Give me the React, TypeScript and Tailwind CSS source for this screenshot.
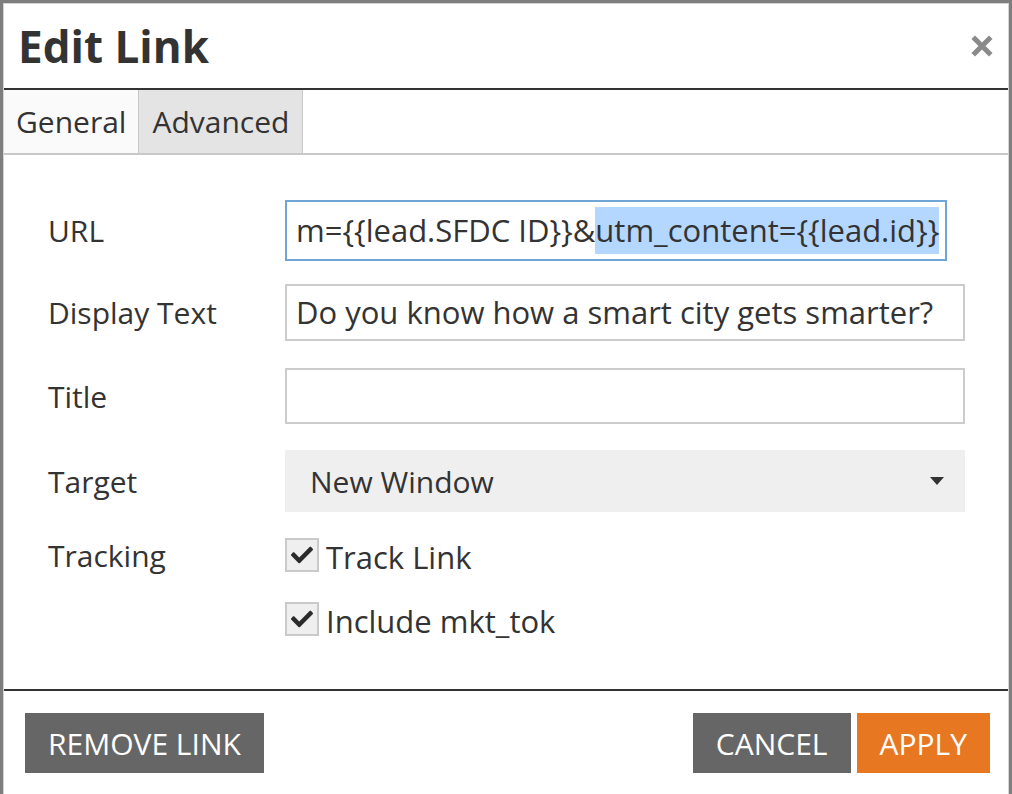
import React from 'react';
import { FaCheck } from 'react-icons/fa';

const Field = ({ label, children, className }: { label: string; children: React.ReactNode; className: string }) => (
  <div className={`flex items-center ${className}`}>
    <div className="w-[237px] shrink-0">{label}</div>
    {children}
  </div>
);

const Checkbox = ({ label }: { label: string }) => (
  <div className="flex items-center h-[34px]">
    <span className="flex items-center justify-center w-[34px] h-[34px] border-2 border-[#cacaca] bg-[#efefef]">
      <FaCheck className="w-[22px] h-[22px] text-[#2b2b2b]" />
    </span>
    <span className="ml-[7px] text-[31px] translate-y-[2px]">{label}</span>
  </div>
);

const App = () => {
  return (
    <div className="w-[1012px] h-[794px] overflow-hidden bg-[#7e7e7e] pt-[3px] px-[3px] font-['Open_Sans',sans-serif] text-[#333333]">
      <div className="h-[800px] bg-white border border-[#d4d4d4] flex flex-col">
        {/* Header */}
        <div className="h-[84px] flex items-center justify-between pl-[14px] pr-[15px]">
          <h1 className="text-[44px] font-bold leading-none text-[#333333]">Edit Link</h1>
          <svg width="22" height="22" viewBox="0 0 22 22" className="text-[#8a8a8a]">
            <path d="M4 4 L18 18 M18 4 L4 18" stroke="currentColor" strokeWidth="5" strokeLinecap="square" />
          </svg>
        </div>
        <div className="h-[2px] bg-[#333333]" />

        {/* Tabs */}
        <div className="flex h-[65px] border-b-2 border-[#c8c8c8] text-[30px]">
          <div className="flex items-center px-[12px] bg-[#fafafa] border-r border-[#c8c8c8]">General</div>
          <div className="flex items-center px-[13px] bg-[#e4e4e4] border-r border-[#c8c8c8]">Advanced</div>
        </div>

        {/* Form */}
        <div className="h-[534px] pl-[44px] text-[30px]">
          <Field label="URL" className="mt-[45px] h-[61px]">
            <div className="w-[662px] h-[61px] border-2 border-[#6fa6d6] flex items-center pl-[9px] overflow-hidden whitespace-nowrap text-[31px]">
              <span>m={'{{'}lead.SFDC ID{'}}'}&amp;</span>
              <span className="bg-[#b3d7ff]">utm_content={'{{'}lead.id{'}}'}</span>
            </div>
          </Field>
          <Field label="Display Text" className="mt-[23px] h-[57px]">
            <div className="w-[680px] h-[57px] border-2 border-[#cccccc] flex items-center pl-[9px] whitespace-nowrap overflow-hidden text-[31px]">
              Do you know how a smart city gets smarter?
            </div>
          </Field>
          <Field label="Title" className="mt-[27px] h-[56px]">
            <div className="w-[680px] h-[56px] border-2 border-[#cccccc]" />
          </Field>
          <Field label="Target" className="mt-[26px] h-[62px]">
            <div className="w-[680px] h-[62px] bg-[#efefef] flex items-center justify-between pl-[25px] pr-[21px]">
              <span>New Window</span>
              <svg width="14" height="8" viewBox="0 0 14 8">
                <path d="M0 0 L14 0 L7 8 Z" fill="#333333" />
              </svg>
            </div>
          </Field>
          <Field label="Tracking" className="mt-[26px] h-[34px]">
            <Checkbox label="Track Link" />
          </Field>
          <div className="flex mt-[30px] pl-[237px]">
            <Checkbox label="Include mkt_tok" />
          </div>
        </div>

        <div className="h-[2px] bg-[#333333]" />

        {/* Footer */}
        <div className="flex justify-between items-start pt-[22px] pl-[21px] pr-[18px] text-[30px] text-white">
          <button className="h-[60px] px-[23px] bg-[#666666] uppercase">Remove Link</button>
          <div className="flex gap-[6px]">
            <button className="h-[60px] px-[23px] bg-[#666666] uppercase">Cancel</button>
            <button className="h-[60px] px-[23px] bg-[#e87722] uppercase">Apply</button>
          </div>
        </div>
      </div>
    </div>
  );
};

export default App;
